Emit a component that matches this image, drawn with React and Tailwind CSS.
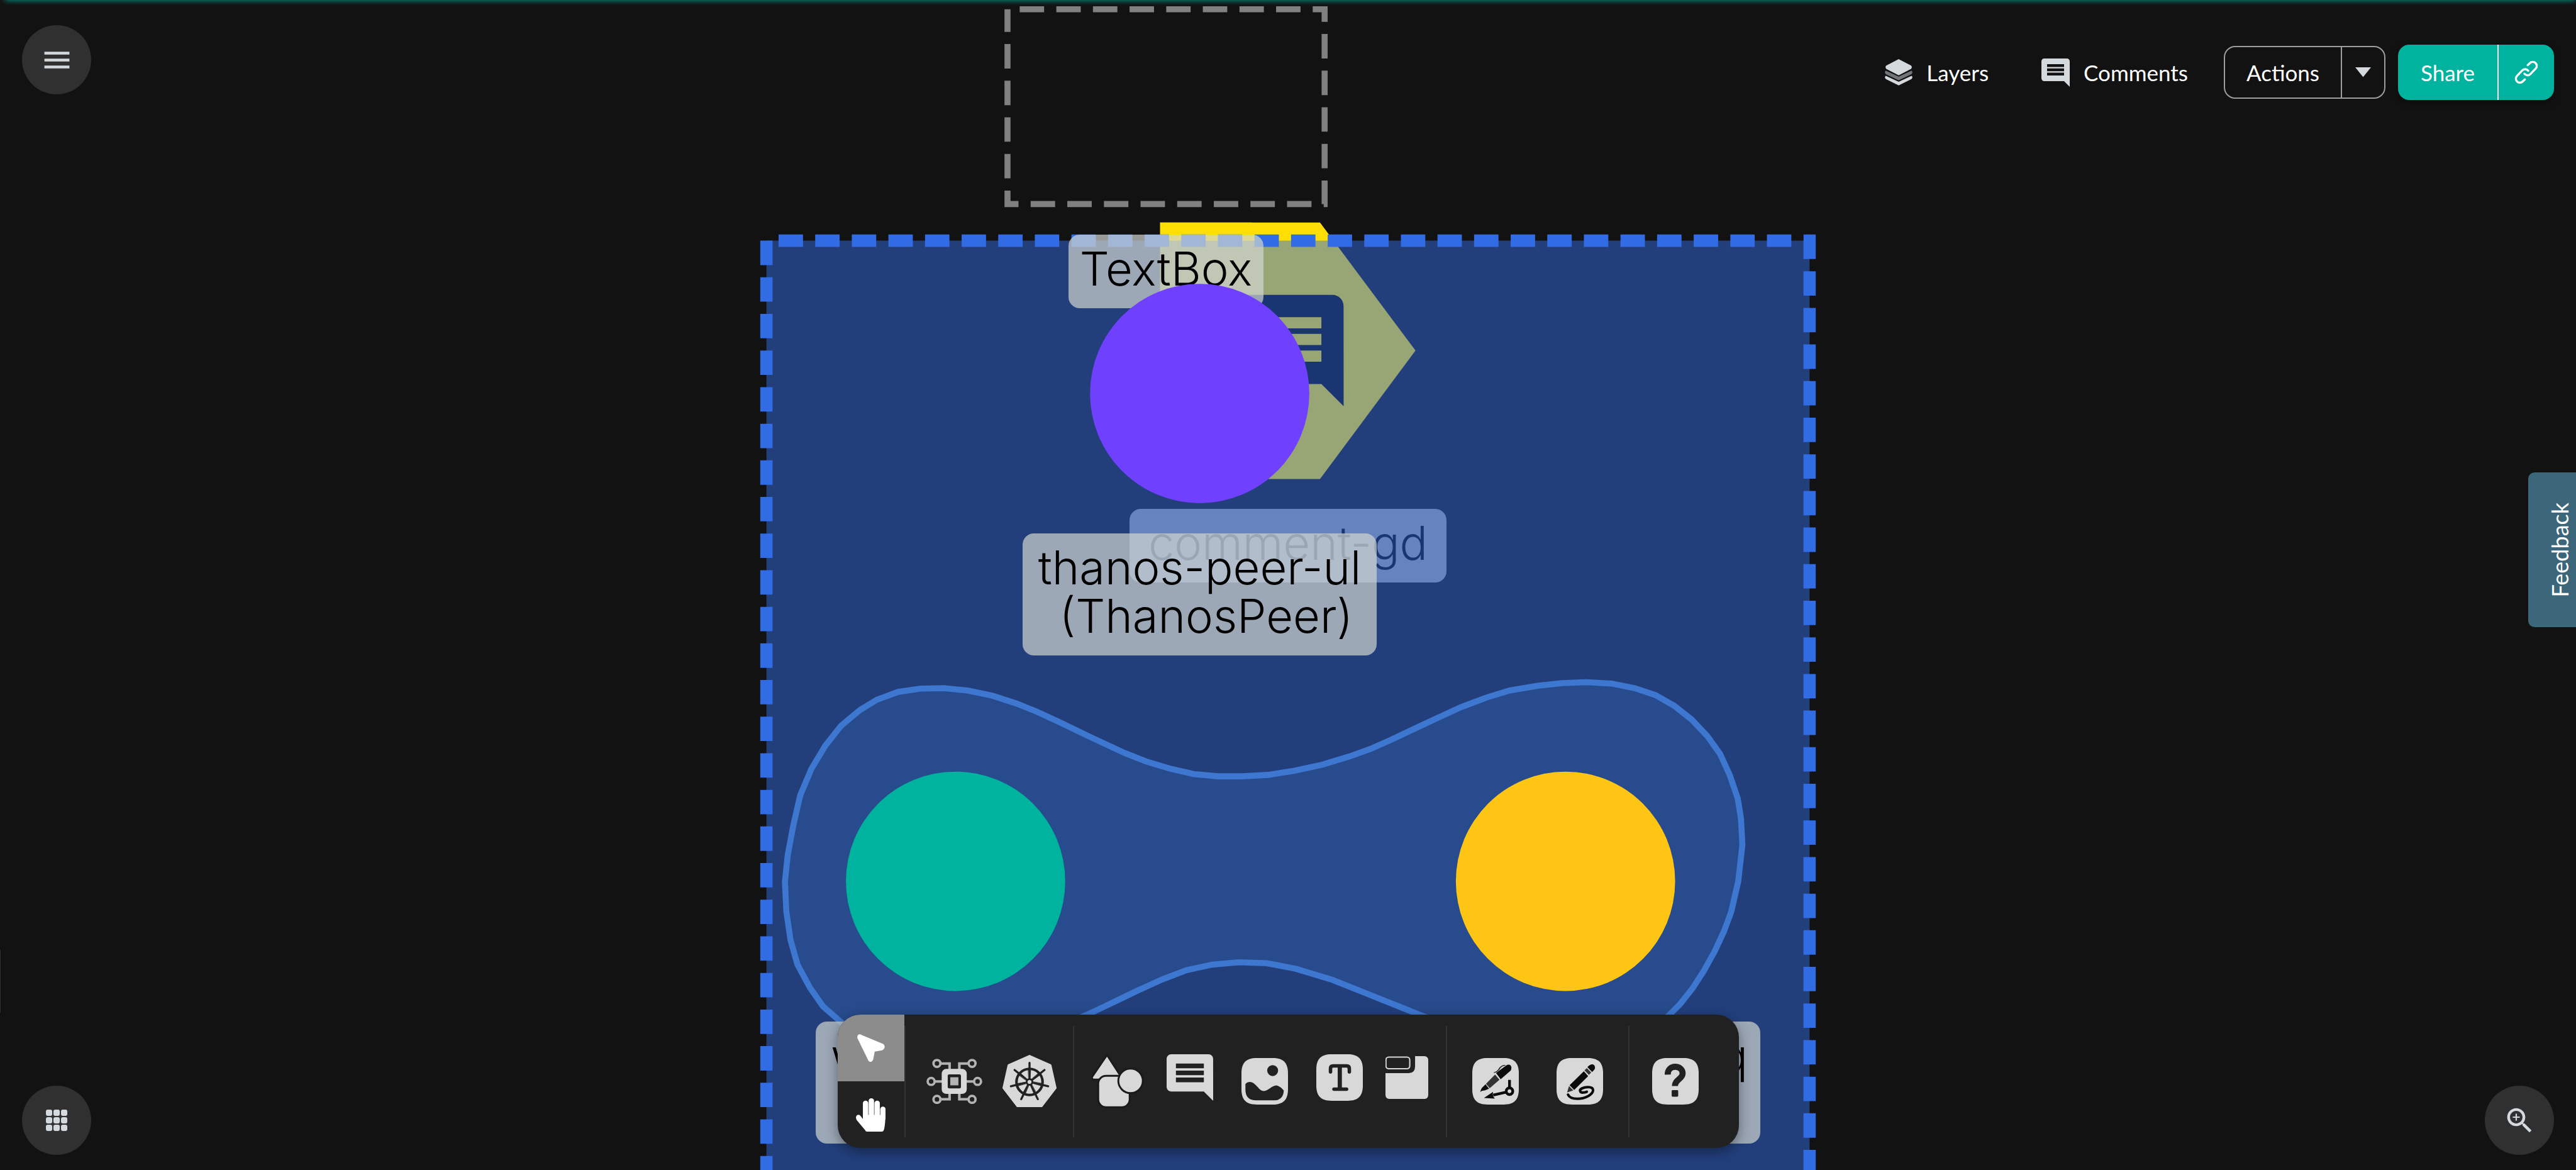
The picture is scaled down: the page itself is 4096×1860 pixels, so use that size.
import React from "react";

const SQUIRCLE =
  "M33 0H67C90 0 100 10 100 33V67C100 90 90 100 67 100H33C10 100 0 90 0 67V33C0 10 10 0 33 0Z";

const COMMENT =
  "M21.99 4c0-1.1-.89-2-1.99-2H4c-1.1 0-2 .9-2 2v12c0 1.1.9 2 2 2h14l4 4-.01-18zM18 14H6v-2h12v2zm0-3H6V9h12v2zm0-3H6V6h12v2z";

const BLOB =
  "2035,1484 2087,1489 2140,1500 2192,1517 2237,1535 2289,1559 2349,1588 2424,1623 2472,1642 2522,1657 2574,1669 2627,1674 2679,1674 2735,1671 2792,1662 2852,1649 2911,1631 2956,1615 3001,1595 3054,1570 3099,1549 3151,1525 3207,1504 3256,1489 3316,1479 3369,1473 3421,1471 3476,1474 3526,1484 3571,1499 3611,1522 3649,1552 3683,1588 3710,1626 3731,1672 3748,1722 3755,1765 3758,1822 3749,1901 3734,1966 3718,2009 3698,2052 3674,2095 3650,2132 3623,2166 3599,2190 3500,2270 3300,2280 3061,2188 3024,2173 2949,2143 2874,2113 2795,2089 2732,2077 2672,2075 2615,2080 2559,2092 2507,2112 2454,2136 2379,2172 2345,2188 2150,2270 1950,2280 1850,2235 1814,2204 1775,2170 1747,2130 1720,2080 1705,2027 1696,1966 1693,1901 1699,1844 1711,1780 1726,1715 1750,1658 1780,1608 1814,1565 1855,1531 1891,1509 1937,1492 1985,1485";

function CanvasLayer({ children }) {
  return (
    <svg viewBox="0 0 5556 2523" aria-hidden="true" className="absolute inset-0 h-full w-full">
      {children}
    </svg>
  );
}

function NodeLabel({ className, children }) {
  return (
    <div
      className={
        "absolute rounded-[18px] bg-[#d1d5d0]/70 pt-[16px] text-center font-['Inter',sans-serif] text-[74px] leading-[77px] font-light whitespace-pre text-black " +
        className
      }
    >
      {children}
    </div>
  );
}

function Canvas() {
  return (
    <main className="absolute inset-0 overflow-hidden" aria-label="Design canvas">
      <CanvasLayer>
        <path
          d="M2173 20H2857V440H2173Z"
          fill="none"
          stroke="#808080"
          strokeWidth="13"
          strokeDasharray="52.7 26.3"
          strokeDashoffset="52.7"
        />
        <path d="M2502 480H2847L3053 756L2847 1033H2502L2640 756Z" fill="#ffde03" />
        <path d="M2502 480H2700V900H2502Z" fill="#ffde03" />
        <path d={COMMENT} transform="translate(2634 612) scale(12)" fill="#000" />
      </CanvasLayer>
      <NodeLabel className="top-[809px] left-[1796px] h-[117px] w-[504px]">comment-gd</NodeLabel>
      <CanvasLayer>
        <path d="M1653 519H3903V2600H1653Z" fill="#326ce5" fillOpacity="0.5" />
        <path
          d="M1653 519H3903V2600"
          fill="none"
          stroke="#326ce5"
          strokeWidth="26.5"
          strokeDasharray="52.63 26.32"
          strokeDashoffset="52.63"
        />
        <path
          d="M1653 519V2600"
          fill="none"
          stroke="#326ce5"
          strokeWidth="26.5"
          strokeDasharray="52.63 26.32"
        />
        <polygon points={BLOB} fill="#274b8c" stroke="#3d77d0" strokeWidth="13" />
      </CanvasLayer>
      <NodeLabel className="top-[373px] left-[1699px] h-[117px] w-[310px]">TextBox</NodeLabel>
      <CanvasLayer>
        <circle cx="2587.5" cy="848.5" r="236.5" fill="#6f41ff" />
        <circle cx="2061" cy="1900.5" r="236.5" fill="#00b39f" />
        <circle cx="3376.5" cy="1900.5" r="236.5" fill="#fec514" />
      </CanvasLayer>
      <NodeLabel className="top-[848px] left-[1626px] h-[194px] w-[563px]">
        {"thanos-peer-ul\n (ThanosPeer)"}
      </NodeLabel>
      <NodeLabel className="top-[1624px] left-[1297px] h-[194px] w-[445px]">
        <span className="block pl-6 text-left">w</span>
      </NodeLabel>
      <NodeLabel className="top-[1624px] left-[2179px] h-[194px] w-[620px]">
        <span className="block pr-5 text-right">q</span>
      </NodeLabel>
    </main>
  );
}

function RoundButton({ label, children }) {
  return (
    <button
      aria-label={label}
      className="flex size-[110px] items-center justify-center rounded-full bg-[#303030] text-[#d3d9dc]"
    >
      {children}
    </button>
  );
}

function LayersIcon() {
  return (
    <svg viewBox="0 0 60 57" className="w-[44px]" fill="#d3d9dc">
      <path d="M30 0L57 14Q60 17.500 57 21L30 35L3 21Q0 17.500 3 14Z" />
      <path fill="#707577" d="M2 25L30 38L58 25Q62 30 57 33L30 46L3 33Q-2 30 2 25Z" />
      <path d="M2 36L30 49L58 36Q62 40 57 43.500L30 57L3 43.500Q-2 40 2 36Z" />
    </svg>
  );
}

function Header() {
  return (
    <header className="relative flex items-start justify-between px-[35px] pt-10">
      <RoundButton label="Menu">
        <svg viewBox="0 0 24 24" className="size-[53px]" fill="currentColor">
          <path d="M3 18h18v-2H3v2zm0-5h18v-2H3v2zm0-7v2h18V6H3z" />
        </svg>
      </RoundButton>
      <div className="flex items-center pt-[31px] text-[35px] leading-[44px] text-white">
        <button className="mr-[84px] flex items-center gap-[22px]">
          <LayersIcon />
          Layers
        </button>
        <button className="mr-[57px] flex items-center gap-[22px]">
          <svg viewBox="2 2 20 20" className="size-[45px]" fill="#d3d9dc">
            <path d={COMMENT} />
          </svg>
          Comments
        </button>
        <div className="mr-5 flex h-[84px] rounded-[18px] border-2 border-[#9e9e9e]">
          <button className="w-[186px] border-r-2 border-[#9e9e9e]">Actions</button>
          <button aria-label="More actions" className="flex w-[67px] items-center justify-center">
            <svg viewBox="0 0 34 21" className="w-[25px]" fill="#d3d9dc">
              <path d="M0 0H34L17 21Z" />
            </svg>
          </button>
        </div>
        <div className="flex h-[88px] overflow-hidden rounded-[18px] bg-[#00b39f] shadow-[0_4px_12px_rgba(0,0,0,0.4)]">
          <button className="w-[160px] border-r-2 border-white">Share</button>
          <button aria-label="Copy link" className="flex w-[88px] items-center justify-center">
            <svg
              viewBox="782 146 165 165"
              className="size-[40px]"
              fill="none"
              stroke="#fff"
              strokeWidth="14"
              strokeLinecap="round"
            >
              <path d="M874 181L888 167.600A26 26 0 0 1 925.500 204.500L892 239A26 26 0 0 1 852 238" />
              <path d="M855 275L841 288.500A26 26 0 0 1 803.500 251.500L837 217A26 26 0 0 1 877 218" />
            </svg>
          </button>
        </div>
      </div>
    </header>
  );
}

function CircuitIcon() {
  const nodes = [
    [22.8, 10.3],
    [98.4, 10.3],
    [10.3, 49],
    [110.3, 49],
    [22.8, 87.7],
    [98.4, 87.7],
  ];
  return (
    <svg viewBox="0 0 120.6 98" className="w-[89px]">
      <g fill="none" stroke="#b3b3b3" strokeWidth="5.5">
        {nodes.map(([x, y]) => (
          <circle key={x + "-" + y} cx={x} cy={y} r="7.500" strokeWidth="5.2" />
        ))}
        <path d="M31 10.500H50V24M90 10.500H71V24M18 49H36M102 49H84M31 87.500H50V74M90 87.500H71V74" />
      </g>
      <rect x="33" y="22" width="54" height="54" rx="10" fill="#d8d8d8" />
      <rect x="46" y="34" width="28.500" height="30" rx="3" fill="#212121" />
      <rect x="51.500" y="40" width="17.500" height="17.500" fill="#b3b3b3" />
    </svg>
  );
}

function KubernetesIcon() {
  return (
    <svg viewBox="0 0 116 112" className="w-[86px]">
      <path
        d="M58 2L103 22L114 71L84 110H32L2 71L13 22Z"
        fill="#d8d8d8"
        stroke="#d8d8d8"
        strokeWidth="4"
        strokeLinejoin="round"
      />
      <g stroke="#212121" strokeLinecap="round" fill="none">
        <circle cx="58" cy="58" r="28" strokeWidth="5.500" />
        {[0, 1, 2, 3, 4, 5, 6].map((i) => (
          <g key={i} transform={`rotate(${(i * 360) / 7} 58 58)`}>
            <path d="M58 30V17" strokeWidth="4.500" />
            <path d="M55.500 30H60.500L59.500 54H56.500Z" fill="#212121" strokeWidth="1" />
          </g>
        ))}
      </g>
      <circle cx="58" cy="58" r="8" fill="#212121" />
      <circle cx="58" cy="58" r="4.200" fill="#d8d8d8" />
    </svg>
  );
}

function ShapesIcon() {
  return (
    <svg viewBox="0 0 113 119" className="w-[83px]" fill="#d8d8d8" stroke="#1a1a1a" strokeWidth="4">
      <path d="M33 3L64 51L62 56H3Q-1 54 1 50Z" />
      <rect x="14" y="48" width="68" height="68" rx="17" />
      <circle cx="84" cy="59" r="26.500" />
    </svg>
  );
}

function Tile({ children }) {
  return (
    <svg viewBox="0 0 100 100" className="size-[74px]">
      <path d={SQUIRCLE} fill="#d8d8d8" />
      {children}
    </svg>
  );
}

function PictureIcon() {
  return (
    <Tile>
      <circle cx="67" cy="27" r="11.700" fill="#212121" />
      <path
        d="M8.500 56Q14 50 22 52C32 55 38 71 48 71C58 71 66 58 76 59Q84 61 91 70Q90 91 70 91H32Q8.500 91 8.500 68Z"
        fill="#212121"
      />
    </Tile>
  );
}

function TextIcon() {
  return (
    <Tile>
      <g fill="none" stroke="#212121" strokeWidth="7.500" strokeLinecap="round">
        <path d="M30.500 38V31Q30.500 25 36 25H65Q71 25 71 31V38" />
        <path d="M50.500 25V75" strokeWidth="9" strokeLinecap="butt" />
        <path d="M38 75H65" />
      </g>
    </Tile>
  );
}

function SectionIcon() {
  return (
    <svg viewBox="0 0 91.6 91.7" className="w-[68px]">
      <rect x="1" y="2" width="51" height="25" rx="6" fill="none" stroke="#d8d8d8" strokeWidth="2.800" />
      <path
        d="M63.400 0H83Q91.600 0 91.600 9V83Q91.600 91.700 83 91.700H9Q0 91.700 0 83V36.500H50Q63.400 36.500 63.400 22Z"
        fill="#d8d8d8"
      />
    </svg>
  );
}

function PenIcon() {
  return (
    <Tile>
      <path d="M51 32L61 45.500L82.500 27Q86 20 82 15.500Q78 12.500 73 16Z" fill="#0b0b0b" />
      <path d="M49 35.500L58.500 46.500L37.500 65L29.500 55.500Z" fill="#333" />
      <path d="M28.500 56.500L36 66L27 69.500Q20 70 17 73Q18 68 21 64Z" fill="#0b0b0b" />
      <g fill="none" stroke="#0b0b0b">
        <path d="M46.500 31.500Q53 30 57 24Q62 15 71 15.500" strokeWidth="1.500" />
        <path d="M50 30.500Q58 27 60 22Q64 16 69 16" strokeWidth="1" />
        <path d="M80 47V63M72 73.500L45 79.500" strokeWidth="6" />
        <circle cx="80" cy="71.300" r="7" strokeWidth="6" />
      </g>
      <path d="M25 85.700L44.700 72.700L44 78L45.500 83L48.500 87Z" fill="#0b0b0b" />
    </Tile>
  );
}

function PencilIcon() {
  return (
    <Tile>
      <path d="M26.700 60L36 69.500L22.700 74Z" fill="#333" />
      <path d="M58.700 28.300L68 38.700L38 68.700L28 58.300Z" fill="#0b0b0b" />
      <path d="M65 21.700L74.500 31L69.500 36.300L60 26.300Z" fill="#333" />
      <path d="M66.300 19.700Q75 10 81 15.500Q86 22 76.500 30Z" fill="#0b0b0b" />
      <path
        d="M24.700 78.700C27 84 35 87.500 45 87.500C62 87.500 78.500 78 78.500 69C78.500 60.500 62 61.500 55 65C47 69 51 75 58 74Q62 74 65 72.500"
        fill="none"
        stroke="#0b0b0b"
        strokeWidth="5.500"
        strokeLinecap="round"
      />
    </Tile>
  );
}

function HelpIcon() {
  return (
    <Tile>
      <path
        d="M33.500 35.500C33 13 65.500 14 65.500 33C65.500 45 49 46 49 60"
        fill="none"
        stroke="#212121"
        strokeWidth="13"
      />
      <rect x="42" y="69" width="14" height="14" rx="2" fill="#212121" />
    </Tile>
  );
}

function Divider() {
  return <div className="h-[177px] w-[2px] bg-[#333333]" />;
}

function Tool({ label, className, children }) {
  return (
    <button aria-label={label} className={className}>
      {children}
    </button>
  );
}

function Toolbar() {
  return (
    <div
      role="toolbar"
      aria-label="Canvas tools"
      className="mb-[11px] flex h-[212px] items-center overflow-hidden rounded-[36px] bg-[#212121] shadow-[0_6px_20px_rgba(0,0,0,0.4)]"
    >
      <div className="flex h-full w-[106px] flex-col">
        <button aria-label="Select" className="flex flex-1 items-center justify-center bg-[#8c8c8c]">
          <svg viewBox="0 0 60 60" className="size-[44px]" fill="#fff">
            <path d="M.500 9C-1 2 4 -2 10 2L56 21C62 25 60 33 54 35L38 37.700L35 54C33 62 25 62 23 55Z" />
          </svg>
        </button>
        <button aria-label="Pan" className="flex flex-1 items-center justify-center">
          <svg viewBox="0 0 64 72" className="h-[53px]" fill="#fff">
            <rect x="15" y="5" width="11.600" height="40" rx="5.700" />
            <rect x="27.500" y="0" width="11.600" height="45" rx="5.700" />
            <rect x="40" y="5" width="11.600" height="40" rx="5.700" />
            <rect x="52.500" y="18" width="11.500" height="30" rx="5.700" />
            <path d="M0 42C0 36 5 34 9 37Q11 39 15 45V36H64L63 52Q62 64 60 69Q59 72 56 72H24Q21 72 20 69L1.500 47Z" />
          </svg>
        </button>
      </div>
      <Divider />
      <div className="flex items-center gap-8 pr-[26px] pl-[33px]">
        <Tool label="Components">
          <CircuitIcon />
        </Tool>
        <Tool label="Kubernetes">
          <KubernetesIcon />
        </Tool>
      </div>
      <Divider />
      <div className="flex items-center gap-9 px-7">
        <Tool label="Shapes">
          <ShapesIcon />
        </Tool>
        <Tool label="Comment" className="pb-3">
          <svg viewBox="2 2 20 20" className="size-[74px]" fill="#d8d8d8">
            <path d={COMMENT} />
          </svg>
        </Tool>
        <Tool label="Image" className="mx-[9px]">
          <PictureIcon />
        </Tool>
        <Tool label="Text" className="pb-3">
          <TextIcon />
        </Tool>
        <Tool label="Section" className="pb-3">
          <SectionIcon />
        </Tool>
      </div>
      <Divider />
      <div className="flex items-center gap-[60px] px-10">
        <Tool label="Pen">
          <PenIcon />
        </Tool>
        <Tool label="Pencil">
          <PencilIcon />
        </Tool>
      </div>
      <Divider />
      <div className="flex items-center pr-16 pl-9">
        <Tool label="Help">
          <HelpIcon />
        </Tool>
      </div>
    </div>
  );
}

function Footer() {
  return (
    <footer className="relative flex items-end justify-between px-[35px] pb-6">
      <RoundButton label="Apps">
        <span className="grid grid-cols-3 gap-[2px]">
          {[0, 1, 2, 3, 4, 5, 6, 7, 8].map((i) => (
            <span key={i} className="size-[10px] rounded-[3px] bg-[#d3d9dc]" />
          ))}
        </span>
      </RoundButton>
      <Toolbar />
      <RoundButton label="Zoom in">
        <svg viewBox="0 0 24 24" className="size-[53px]" fill="currentColor">
          <path d="M15.500 14h-.79l-.28-.27C15.410 12.590 16 11.110 16 9.500 16 5.910 13.090 3 9.500 3S3 5.910 3 9.500 5.910 16 9.500 16c1.610 0 3.090-.59 4.230-1.570l.27.28v.79l5 4.990L20.490 19l-4.990-5zm-6 0C7.010 14 5 11.990 5 9.500S7.010 5 9.500 5 14 7.010 14 9.500 11.990 14 9.500 14zM12 10h-2v2H9v-2H7V9h2V7h1v2h2v1z" />
        </svg>
      </RoundButton>
    </footer>
  );
}

export default function App() {
  return (
    <div className="relative flex h-screen flex-col justify-between overflow-hidden bg-[#121212] font-['Lato',sans-serif]">
      <Canvas />
      <div className="absolute -top-2 right-0 left-2 h-2 shadow-[0_0_10px_#00b39f]" />
      <div className="absolute top-[1510px] left-0 h-[100px] w-px bg-[#28323a]" />
      <Header />
      <button className="absolute top-[751px] right-0 flex h-[246px] w-[76px] items-center justify-center rounded-l-[10px] bg-[#3c667a] pl-6 text-[36px] leading-[44px] text-white">
        <span className="rotate-180 [writing-mode:vertical-rl]">Feedback</span>
      </button>
      <Footer />
    </div>
  );
}
